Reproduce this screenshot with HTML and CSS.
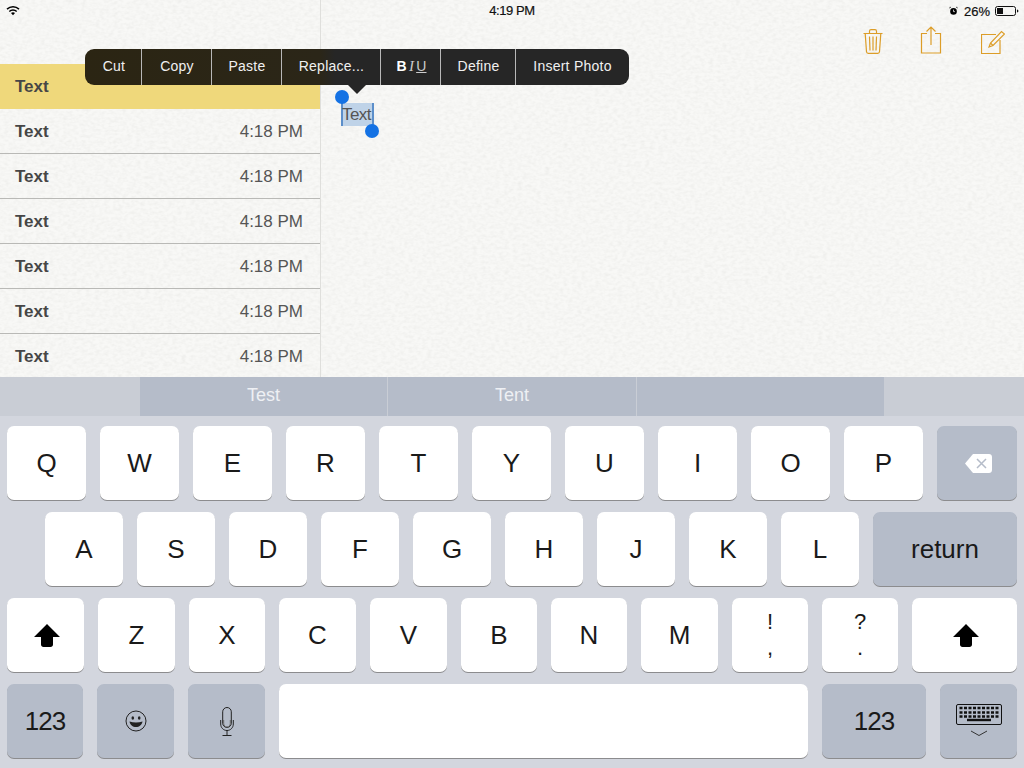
FILE: index.html
```html
<!DOCTYPE html>
<html lang="en">
<head>
  <meta charset="UTF-8" />
  <title>Notes</title>
  <link rel="stylesheet" href="styles.css">
</head>
<body>
  <div class="screen">
    <div class="notes">
      <!-- paper grain behind the panes -->
      <svg class="paper" width="1024" height="377" aria-hidden="true">
        <filter id="grain" x="0" y="0" width="100%" height="100%">
          <feTurbulence type="fractalNoise" baseFrequency="0.22 0.34" numOctaves="2" seed="4" />
          <feColorMatrix values="0 0 0 0 0.5  0 0 0 0 0.5  0 0 0 0 0.47  0.2 0.2 0 0 -0.16" />
        </filter>
        <rect width="1024" height="377" fill="#f8f8f6" />
        <rect width="1024" height="377" filter="url(#grain)" />
      </svg>

      <div class="status">
        <svg class="wifi" width="14" height="11" viewBox="0 0 14 11">
          <path d="M.5 3.6a9.2 9.2 0 0 1 13 0l-1 1.1a7.8 7.8 0 0 0-11 0zM2.8 5.9a6 6 0 0 1 8.4 0l-1 1.1a4.600 4.600 0 0 0-6.400 0zM5 8.100a2.900 2.900 0 0 1 4 0L7 10.300z" />
        </svg>
        <span class="status_time">4:19 PM</span>
        <span class="status_right">
          <svg width="9" height="10" viewBox="0 0 10 10">
            <circle cx="5" cy="5.500" r="3.700" />
            <path d="M.3 2.500 2.300.6 1 .4zM9.700 2.500 7.700.6 9 .4z" />
            <path d="M5 3.500v2.200h1.600" fill="none" stroke="#fff" stroke-width=".8" />
          </svg>
          <span class="status_pct">26%</span>
          <svg width="24" height="10" viewBox="0 0 24 10">
            <rect x=".5" y=".5" width="20" height="9" rx="2" fill="none" stroke="#111" />
            <rect x="2" y="2" width="6" height="6" fill="#111" />
            <path d="M22 3.500c1 .2 1.400.8 1.400 1.500s-.4 1.300-1.400 1.500z" fill="#111" />
          </svg>
        </span>
      </div>

      <aside class="list">
        <div class="row active"><strong>Text</strong></div>
        <div class="row"><strong>Text</strong><span>4:18 PM</span></div>
        <div class="row"><strong>Text</strong><span>4:18 PM</span></div>
        <div class="row"><strong>Text</strong><span>4:18 PM</span></div>
        <div class="row"><strong>Text</strong><span>4:18 PM</span></div>
        <div class="row"><strong>Text</strong><span>4:18 PM</span></div>
        <div class="row"><strong>Text</strong><span>4:18 PM</span></div>
      </aside>

      <section class="editor">
        <div class="toolbar">
          <svg width="20" height="25" viewBox="0 0 20 25" class="tool tool_trash">
            <path d="M.5 4.500h19M6.500 4.500V2.200c0-1 .6-1.500 1.500-1.500h4c.9 0 1.500.5 1.500 1.500v2.300M2.200 4.500l1.300 18.200c.1 1 .7 1.600 1.700 1.600h9.600c1 0 1.600-.6 1.700-1.600l1.300-18.200M6.500 7.500l.5 14M10 7.500v14M13.500 7.500l-.5 14" />
          </svg>
          <svg width="22" height="28" viewBox="0 0 22 28" class="tool">
            <path d="M7 7.500H1.500v19.500h19V7.500H15M11 19V1M6.500 5.500 11 1l4.500 4.500" />
          </svg>
          <svg width="24" height="24" viewBox="0 0 24 24" class="tool">
            <path d="M15 4.500H.5v19h18.500V10M8 17l1.500-4L20.500 1.500l3 2.500L12 15.500zM9.500 13l2.500 2.500" />
          </svg>
        </div>
        <div class="note">
          <span class="selection">Text<i class="handle handle_start"></i><i class="handle handle_end"></i></span>
        </div>
      </section>

      <div class="menu">
        <span class="item item_cut">Cut</span>
        <span class="item item_copy">Copy</span>
        <span class="item item_paste">Paste</span>
        <span class="item item_replace">Replace...</span>
        <span class="item item_biu"><b>B</b><em>I</em><u>U</u></span>
        <span class="item item_define">Define</span>
        <span class="item item_photo">Insert Photo</span>
      </div>
    </div>

    <div class="suggest">
      <span class="word">Test</span>
      <span class="word">Tent</span>
      <span class="word"></span>
    </div>

    <div class="keyboard">
      <div class="keys">
        <span class="key w79">Q</span><span class="key w79">W</span><span class="key w79">E</span><span class="key w79">R</span><span class="key w79">T</span><span class="key w79">Y</span><span class="key w79">U</span><span class="key w79">I</span><span class="key w79">O</span><span class="key w79">P</span>
        <span class="key dark w80">
          <svg class="backspace" width="27" height="19" viewBox="0 0 27 19">
            <path d="M8 0h16c1.700 0 3 1.300 3 3v13c0 1.700-1.300 3-3 3H8L0 9.500z" fill="#fff" />
            <path d="m12 5 9 9M21 5l-9 9" stroke="#b5bcc9" stroke-width="1.500" />
          </svg>
        </span>
      </div>
      <div class="keys keys_home">
        <span class="key w78">A</span><span class="key w78">S</span><span class="key w78">D</span><span class="key w78">F</span><span class="key w78">G</span><span class="key w78">H</span><span class="key w78">J</span><span class="key w78">K</span><span class="key w78">L</span>
        <span class="key dark w144">return</span>
      </div>
      <div class="keys">
        <span class="key w77">
          <svg class="shift" width="26" height="23" viewBox="0 0 26 23"><path d="M13 0 26 13h-7v7.500c0 1.500-1 2.500-2.500 2.500h-7C8 23 7 22 7 20.500V13H0z" /></svg>
        </span>
        <span class="key w77">Z</span><span class="key w76">X</span><span class="key w77">C</span><span class="key w77">V</span><span class="key w76">B</span><span class="key w76">N</span><span class="key w77">M</span>
        <span class="key w76 punct">!<br>,</span><span class="key w76 punct">?<br>.</span>
        <span class="key w105">
          <svg class="shift" width="26" height="23" viewBox="0 0 26 23"><path d="M13 0 26 13h-7v7.500c0 1.500-1 2.500-2.500 2.500h-7C8 23 7 22 7 20.500V13H0z" /></svg>
        </span>
      </div>
      <div class="keys">
        <span class="key dark w76 num">123</span>
        <span class="key dark w77">
          <svg width="22" height="22" viewBox="0 0 22 22" fill="none" stroke="#222" stroke-width="1">
            <circle cx="11" cy="11" r="10" />
            <ellipse cx="7.800" cy="8" rx="1.300" ry="1.800" fill="#222" stroke="none" />
            <ellipse cx="14.200" cy="8" rx="1.300" ry="1.800" fill="#222" stroke="none" />
            <path d="M4.500 11.500c4 1.200 9 1.200 13 0-.5 3.500-3.300 5.500-6.500 5.500s-6-2-6.500-5.500z" fill="#222" stroke="none" />
          </svg>
        </span>
        <span class="key dark w77">
          <svg width="14" height="29" viewBox="0 0 14 29" fill="none" stroke="#222" stroke-width="1">
            <rect x="2.700" y=".5" width="8.600" height="20" rx="4.300" />
            <path d="M.7 13v4c0 3.600 2.700 6.500 6.300 6.500s6.300-2.900 6.300-6.500v-4M7 23.500v5M2.500 28.500h9" />
            <path d="M3.700 13v3.500c0 2.200 1.300 3.500 3.300 3.500s3.300-1.300 3.300-3.500V13" stroke="#666" />
          </svg>
        </span>
        <span class="key w529"></span>
        <span class="key dark w104 num">123</span>
        <span class="key dark w77">
          <svg width="46" height="35" viewBox="0 0 46 35">
            <rect x=".5" y=".5" width="45" height="20" rx="1.500" fill="none" stroke="#111" />
            <path d="M3.500 4h39M3.500 8.500h39M3.500 12.500h39" stroke="#111" stroke-width="2.400" stroke-dasharray="3 1.500" fill="none" />
            <rect x="11" y="14.800" width="24" height="2.400" fill="#111" />
            <path d="m15 27 8 4.500 8-4.500" fill="none" stroke="#333" />
          </svg>
        </span>
      </div>
    </div>
  </div>
</body>
</html>
```

FILE: styles.css
```css
body {
  margin: 0;
  font-family: "Liberation Sans", Arial, sans-serif;
  color: #111;
  overflow: hidden;
}

.screen {
  width: 1024px;
  height: 768px;
  display: flex;
  flex-direction: column;
  overflow: hidden;
}

/* notes app */
.notes {
  height: 377px;
  position: relative;
  display: flex;
  overflow: hidden;
  flex: none;
}

.paper {
  position: absolute;
  top: 0;
  left: 0;
}

.status {
  position: absolute;
  top: 0;
  left: 0;
  right: 0;
  height: 21px;
  font-size: 13px;
  color: #111;
}

.wifi {
  position: absolute;
  left: 6px;
  top: 5px;
}

.status_time {
  position: absolute;
  left: 0;
  right: 0;
  top: 3px;
  text-align: center;
  letter-spacing: -0.4px;
  -webkit-text-stroke: 0.2px #111;
}

.status_right {
  position: absolute;
  right: 5px;
  top: 3px;
  display: flex;
  align-items: center;
  height: 16px;
}

.status_pct {
  margin: 0 5px 0 6px;
  -webkit-text-stroke: 0.2px #111;
}

.list {
  width: 320px;
  flex: none;
  padding-top: 64px;
  border-right: 1px solid #dfdfdc;
  position: relative;
}

.row {
  height: 45px;
  box-sizing: border-box;
  padding: 1px 17px 0 15px;
  display: flex;
  align-items: center;
  justify-content: space-between;
  font-size: 17px;
  color: #555;
  border-bottom: 1px solid #b9b9b6;
}

.row strong {
  color: #464646;
}

.row.active {
  background: #efd87b;
  border-bottom: none;
}

.editor {
  flex: 1;
  position: relative;
}

.toolbar {
  display: flex;
  justify-content: flex-end;
  align-items: flex-end;
  gap: 39px;
  height: 54px;
  padding-right: 19px;
}

.tool {
  fill: none;
  stroke: #dc9d28;
  stroke-width: 1.2;
}

.tool_trash {
  margin-right: -2px;
}

.note {
  padding: 49px 0 0 20px;
  font-size: 17px;
  line-height: 23px;
  color: #555;
}

.selection {
  display: inline-block;
  position: relative;
  width: 33px;
  padding-left: 1px;
  box-sizing: border-box;
  background: #bfd3e8;
  box-shadow: inset 2px 0 0 #5c8fca, inset -2px 0 0 #5c8fca;
  letter-spacing: -0.6px;
}

.handle {
  position: absolute;
  width: 14px;
  height: 14px;
  border-radius: 50%;
  background: #1472e4;
}

.handle_start {
  left: -6px;
  top: -13px;
}

.handle_end {
  right: -5px;
  bottom: -12px;
}

/* edit menu */
.menu {
  position: absolute;
  left: 85px;
  top: 49px;
  width: 544px;
  height: 36px;
  display: flex;
  border-radius: 9px;
  background: linear-gradient(to right, #2b2513 0, #2b2618 235px, #262626 250px);
  color: #f0f0f0;
  font-size: 14px;
  letter-spacing: 0.25px;
}

.menu::after {
  content: "";
  position: absolute;
  left: 263px;
  top: 36px;
  border: 9px solid transparent;
  border-top-color: #262626;
  border-bottom: none;
}

.item {
  display: flex;
  align-items: center;
  justify-content: center;
  border-right: 1px solid #b8b8b8;
  box-sizing: border-box;
  height: 36px;
  padding-bottom: 2px;
}

.item_cut { width: 57px; padding-left: 2px; }
.item_copy { width: 70px; padding-left: 1px; }
.item_paste { width: 70px; padding-left: 1px; }
.item_replace { width: 99px; padding-left: 1px; }
.item_biu { width: 60px; gap: 2px; padding-left: 2px; }
.item_define { width: 75px; padding-left: 1px; }
.item_photo { width: 113px; border-right: none; }

.item_biu b { font-size: 14px; color: #fff; }
.item_biu em { font-size: 15px; font-family: "Liberation Serif", serif; color: #ccc; }
.item_biu u { font-size: 14px; color: #ccc; }

/* keyboard */
.suggest {
  height: 39px;
  flex: none;
  background: #c9cdd5;
  display: flex;
  justify-content: center;
}

.word {
  width: 248px;
  background: #b5bcc9;
  display: flex;
  align-items: center;
  justify-content: center;
  color: #eef0f4;
  font-size: 18px;
  box-sizing: border-box;
  padding-bottom: 2px;
  border-right: 1px solid #c9cdd5;
}

.word:nth-child(2) {
  width: 249px;
}

.word:last-child {
  width: 247px;
  border-right: none;
}

.keyboard {
  flex: 1;
  background: #d3d6de;
  padding: 10px 7px 0;
  display: flex;
  flex-direction: column;
  gap: 12px;
}

.keys {
  display: flex;
  gap: 14px;
}

.keys_home {
  padding-left: 38px;
}

.key {
  height: 74px;
  box-sizing: border-box;
  display: flex;
  align-items: center;
  justify-content: center;
  text-align: center;
  border-radius: 7px;
  background: #fff;
  box-shadow: 0 1px 0 #8c8c8e;
  font-size: 26px;
  color: #1a1a1a;
  flex: none;
}

.key.dark {
  background: #b5bcc9;
}

.num {
  letter-spacing: -1px;
}

.punct {
  font-size: 22px;
  line-height: 26px;
}

.shift {
  margin-left: 2px;
}

.backspace {
  margin-left: 3px;
}

.w76 { width: 76px; }
.w77 { width: 77px; }
.w78 { width: 78px; }
.w79 { width: 79px; }
.w80 { width: 80px; }
.w104 { width: 104px; }
.w105 { width: 105px; }
.w144 { width: 144px; }
.w529 { width: 529px; }
```
